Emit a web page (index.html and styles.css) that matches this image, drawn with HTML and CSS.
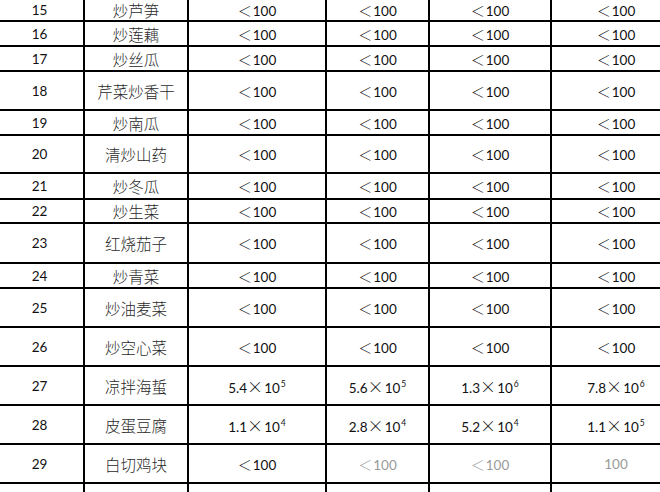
FILE: index.html
```html
<!DOCTYPE html>
<html lang="zh-CN">
<head>
<meta charset="utf-8">
<title>检测结果</title>
<link rel="stylesheet" href="styles.css">
</head>
<body>
<div class="sheet">
  <div class="c num">15</div><div class="c name">炒芦笋</div><div class="c val"><span><span class="lt">＜</span>100</span></div><div class="c val"><span><span class="lt">＜</span>100</span></div><div class="c val"><span><span class="lt">＜</span>100</span></div><div class="c val"><span><span class="lt">＜</span>100</span></div>
  <div class="c num">16</div><div class="c name">炒莲藕</div><div class="c val"><span><span class="lt">＜</span>100</span></div><div class="c val"><span><span class="lt">＜</span>100</span></div><div class="c val"><span><span class="lt">＜</span>100</span></div><div class="c val"><span><span class="lt">＜</span>100</span></div>
  <div class="c num">17</div><div class="c name">炒丝瓜</div><div class="c val"><span><span class="lt">＜</span>100</span></div><div class="c val"><span><span class="lt">＜</span>100</span></div><div class="c val"><span><span class="lt">＜</span>100</span></div><div class="c val"><span><span class="lt">＜</span>100</span></div>
  <div class="c num">18</div><div class="c name">芹菜炒香干</div><div class="c val"><span><span class="lt">＜</span>100</span></div><div class="c val"><span><span class="lt">＜</span>100</span></div><div class="c val"><span><span class="lt">＜</span>100</span></div><div class="c val"><span><span class="lt">＜</span>100</span></div>
  <div class="c num">19</div><div class="c name">炒南瓜</div><div class="c val"><span><span class="lt">＜</span>100</span></div><div class="c val"><span><span class="lt">＜</span>100</span></div><div class="c val"><span><span class="lt">＜</span>100</span></div><div class="c val"><span><span class="lt">＜</span>100</span></div>
  <div class="c num">20</div><div class="c name">清炒山药</div><div class="c val"><span><span class="lt">＜</span>100</span></div><div class="c val"><span><span class="lt">＜</span>100</span></div><div class="c val"><span><span class="lt">＜</span>100</span></div><div class="c val"><span><span class="lt">＜</span>100</span></div>
  <div class="c num">21</div><div class="c name">炒冬瓜</div><div class="c val"><span><span class="lt">＜</span>100</span></div><div class="c val"><span><span class="lt">＜</span>100</span></div><div class="c val"><span><span class="lt">＜</span>100</span></div><div class="c val"><span><span class="lt">＜</span>100</span></div>
  <div class="c num">22</div><div class="c name">炒生菜</div><div class="c val"><span><span class="lt">＜</span>100</span></div><div class="c val"><span><span class="lt">＜</span>100</span></div><div class="c val"><span><span class="lt">＜</span>100</span></div><div class="c val"><span><span class="lt">＜</span>100</span></div>
  <div class="c num">23</div><div class="c name">红烧茄子</div><div class="c val"><span><span class="lt">＜</span>100</span></div><div class="c val"><span><span class="lt">＜</span>100</span></div><div class="c val"><span><span class="lt">＜</span>100</span></div><div class="c val"><span><span class="lt">＜</span>100</span></div>
  <div class="c num">24</div><div class="c name">炒青菜</div><div class="c val"><span><span class="lt">＜</span>100</span></div><div class="c val"><span><span class="lt">＜</span>100</span></div><div class="c val"><span><span class="lt">＜</span>100</span></div><div class="c val"><span><span class="lt">＜</span>100</span></div>
  <div class="c num">25</div><div class="c name">炒油麦菜</div><div class="c val"><span><span class="lt">＜</span>100</span></div><div class="c val"><span><span class="lt">＜</span>100</span></div><div class="c val"><span><span class="lt">＜</span>100</span></div><div class="c val"><span><span class="lt">＜</span>100</span></div>
  <div class="c num">26</div><div class="c name">炒空心菜</div><div class="c val"><span><span class="lt">＜</span>100</span></div><div class="c val"><span><span class="lt">＜</span>100</span></div><div class="c val"><span><span class="lt">＜</span>100</span></div><div class="c val"><span><span class="lt">＜</span>100</span></div>
  <div class="c num">27</div><div class="c name">凉拌海蜇</div><div class="c val"><span>5.4<span class="x">×</span>10<sup>5</sup></span></div><div class="c val"><span>5.6<span class="x">×</span>10<sup>5</sup></span></div><div class="c val"><span>1.3<span class="x">×</span>10<sup>6</sup></span></div><div class="c val"><span>7.8<span class="x">×</span>10<sup>6</sup></span></div>
  <div class="c num">28</div><div class="c name">皮蛋豆腐</div><div class="c val"><span>1.1<span class="x">×</span>10<sup>4</sup></span></div><div class="c val"><span>2.8<span class="x">×</span>10<sup>4</sup></span></div><div class="c val"><span>5.2<span class="x">×</span>10<sup>4</sup></span></div><div class="c val"><span>1.1<span class="x">×</span>10<sup>5</sup></span></div>
  <div class="c num">29</div><div class="c name">白切鸡块</div><div class="c val"><span><span class="lt">＜</span>100</span></div><div class="c val faded"><span><span class="lt">＜</span>100</span></div><div class="c val faded"><span><span class="lt">＜</span>100</span></div><div class="c val faded"><span>100</span></div>
  <div class="c"></div><div class="c"></div><div class="c"></div><div class="c"></div><div class="c"></div><div class="c"></div>
</div>
</body>
</html>
```

FILE: styles.css
```css
html, body {
  margin: 0;
  padding: 0;
  background: #ffffff;
  width: 660px;
  height: 492px;
  overflow: hidden;
}

.sheet {
  display: grid;
  grid-template-columns: 87px 102px 136px 101px 120px 128px;
  grid-template-rows: 20px 23px 23px 37px 23px 36px 24px 22px 38px 23px 37px 37px 37px 37px 37px 30px;
  gap: 2px;
  background: #000000;
  width: 684px;
  margin: 0 0 0 -4px;
}

.c {
  background: #ffffff;
  display: flex;
  align-items: center;
  justify-content: center;
  padding-top: 2px;
  box-sizing: border-box;
  color: #111111;
  white-space: nowrap;
  line-height: 1.15;
}

.num, .val {
  font-family: Lato, "Open Sans", sans-serif;
  font-size: 13.5px;
}

.name {
  font-family: "Noto Sans CJK SC", sans-serif;
  font-size: 15.5px;
  font-weight: 300;
  color: #2a2a2a;
}

.lt {
  font-family: "Noto Sans CJK SC", sans-serif;
  font-weight: 200;
  font-size: 14px;
  margin-right: 1px;
}

.x {
  font-family: "Noto Sans CJK SC", sans-serif;
  font-weight: 200;
  font-size: 16px;
  margin: 0 1px 0 0;
}

sup {
  font-size: 8.5px;
  vertical-align: 6px;
  line-height: 0;
  margin-left: 1px;
}

.faded {
  color: #9a9a9a;
}
```
